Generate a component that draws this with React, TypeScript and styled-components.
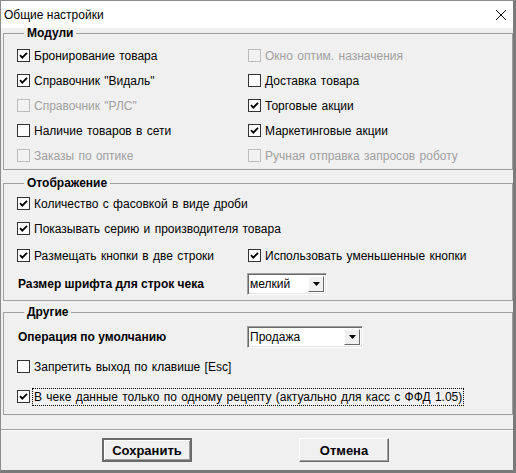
import React from "react";
import styled, { createGlobalStyle } from "styled-components";

const Global = createGlobalStyle`
  html, body { margin: 0; padding: 0; background: #f0f0f0; }
  body { font-family: "Liberation Sans", Arial, sans-serif; font-size: 12px; word-spacing: 1px; color: #000; }
  * { box-sizing: border-box; }
`;

const Window = styled.div`
  width: 516px;
  height: 473px;
  display: flex;
  flex-direction: column;
  background: #f0f0f0;
  border-left: 1px solid #8c8c8c;
  border-top: 1px solid #8c8c8c;
  border-right: 3px solid #7a7a7a;
  border-bottom: 3px solid #7a7a7a;
  overflow: hidden;
`;

const TitleBar = styled.div`
  height: 27px;
  flex: none;
  background: #fff;
  display: flex;
  align-items: center;
  justify-content: space-between;
  padding: 0 6px 0 3px;
`;

const Title = styled.span`
  font-family: "Liberation Sans", Arial, sans-serif;
  font-size: 12px;
  word-spacing: 0;
  color: #000;
`;

const Body = styled.div`
  display: flex;
  flex-direction: column;
  padding-left: 2px;
`;

const Group = styled.fieldset<{ $mt: number; $pt: number; $pb: number }>`
  margin: ${(p) => p.$mt}px 0 0 0;
  padding: ${(p) => p.$pt}px 0 ${(p) => p.$pb}px 13px;
  border: 1px solid #a0a0a0;
  min-width: 0;
`;

const Legend = styled.legend`
  font-weight: bold;
  font-size: 12px;
  word-spacing: 0;
  line-height: 10px;
  padding: 0 3px;
  margin-left: 7px;
`;

const Grid = styled.div`
  display: grid;
  grid-template-columns: 231px 1fr;
`;

const Row = styled.div<{ $mt?: number; $h?: number }>`
  display: flex;
  align-items: center;
  height: ${(p) => p.$h ?? 25}px;
  margin-top: ${(p) => p.$mt ?? 0}px;
`;

const CheckLabel = styled.label<{ $disabled?: boolean }>`
  display: flex;
  align-items: center;
  gap: 5px;
  color: ${(p) => (p.$disabled ? "#a0a0a0" : "#000")};
  white-space: nowrap;
`;

const Box = styled.span<{ $disabled?: boolean }>`
  width: 13px;
  height: 13px;
  flex: none;
  border: 1px solid ${(p) => (p.$disabled ? "#bdbdbd" : "#333")};
  background: ${(p) => (p.$disabled ? "#f2f2f2" : "#fff")};
  display: flex;
  align-items: center;
  justify-content: center;
`;

const Text = styled.span<{ $focus?: boolean }>`
  padding: 1px 1px;
  margin-left: -2px;
  outline: ${(p) => (p.$focus ? "1px dotted #000" : "none")};
  outline-offset: 0;
`;

const BoldLabel = styled.span`
  font-weight: bold;
  font-size: 12px;
  word-spacing: 0;
  padding-left: 1px;
`;

const SettingRow = styled.div<{ $mt: number; $h: number }>`
  display: grid;
  grid-template-columns: 230px auto;
  align-items: center;
  height: ${(p) => p.$h}px;
  margin-top: ${(p) => p.$mt}px;
`;

const Combo = styled.div<{ $w: number }>`
  width: ${(p) => p.$w}px;
  height: 22px;
  display: flex;
  background: #fff;
  border-top: 1px solid #a0a0a0;
  border-left: 1px solid #a0a0a0;
  border-right: 1px solid #fff;
  border-bottom: 1px solid #fff;
  box-shadow: inset 1px 1px 0 #696969, inset -1px -1px 0 #e3e3e3;
  padding: 2px;
`;

const ComboText = styled.span`
  flex: 1;
  display: flex;
  align-items: center;
  color: #000;
`;

const DropBtn = styled.span`
  width: 16px;
  flex: none;
  background: #f0f0f0;
  border-top: 1px solid #fff;
  border-left: 1px solid #fff;
  border-right: 1px solid #696969;
  border-bottom: 1px solid #696969;
  display: flex;
  align-items: center;
  justify-content: center;
`;

const ButtonBar = styled.div`
  flex: 1;
  margin-top: 14px;
  border-top: 1px solid #a0a0a0;
  box-shadow: inset 0 1px 0 #fff;
  display: flex;
  align-items: flex-start;
  padding: 8px 0 0 101px;
  gap: 107px;
`;

const Button = styled.button<{ $default?: boolean }>`
  width: 90px;
  height: 24px;
  font-family: "Liberation Sans", Arial, sans-serif;
  font-size: 13px;
  font-weight: bold;
  color: #000;
  background: #f0f0f0;
  padding: 0;
  border: ${(p) => (p.$default ? "2px solid #6a6a6a" : "1px solid")};
  border-color: ${(p) => (p.$default ? "#6a6a6a" : "#fff #696969 #696969 #fff")};
  box-shadow: ${(p) =>
    p.$default ? "inset 1px 1px 0 #fff, inset -1px -1px 0 #a0a0a0" : "inset -1px -1px 0 #a0a0a0"};
`;

const Check = () => (
  <svg width="9" height="9" viewBox="0 0 9 9">
    <polyline points="1,4.2 3.3,6.6 8,1.8" fill="none" stroke="#000" strokeWidth="1.8" />
  </svg>
);

const CheckBox = ({
  label,
  checked,
  disabled,
  focus,
}: {
  label: string;
  checked?: boolean;
  disabled?: boolean;
  focus?: boolean;
}) => (
  <CheckLabel $disabled={disabled}>
    <Box $disabled={disabled}>{checked && <Check />}</Box>
    <Text $focus={focus}>{label}</Text>
  </CheckLabel>
);

const Arrow = () => (
  <svg width="7" height="4" viewBox="0 0 7 4">
    <polygon points="0,0 7,0 3.5,4" fill="#000" />
  </svg>
);

const ComboBox = ({ value, width }: { value: string; width: number }) => (
  <Combo $w={width}>
    <ComboText>{value}</ComboText>
    <DropBtn>
      <Arrow />
    </DropBtn>
  </Combo>
);

const CloseIcon = () => (
  <svg width="12" height="12" viewBox="0 0 12 12">
    <path d="M1 1 L11 11 M11 1 L1 11" stroke="#000" strokeWidth="1" fill="none" />
  </svg>
);

export default function App() {
  return (
    <>
      <Global />
      <Window>
        <TitleBar>
          <Title>Общие настройки</Title>
          <CloseIcon />
        </TitleBar>
        <Body>
          <Group $mt={0} $pt={5} $pb={1}>
            <Legend>Модули</Legend>
            <Grid>
              <Row><CheckBox label="Бронирование товара" checked /></Row>
              <Row><CheckBox label="Окно оптим. назначения" disabled /></Row>
              <Row><CheckBox label='Справочник "Видаль"' checked /></Row>
              <Row><CheckBox label="Доставка товара" /></Row>
              <Row><CheckBox label='Справочник "РЛС"' disabled /></Row>
              <Row><CheckBox label="Торговые акции" checked /></Row>
              <Row><CheckBox label="Наличие товаров в сети" /></Row>
              <Row><CheckBox label="Маркетинговые акции" checked /></Row>
              <Row><CheckBox label="Заказы по оптике" disabled /></Row>
              <Row><CheckBox label="Ручная отправка запросов роботу" disabled /></Row>
            </Grid>
          </Group>
          <Group $mt={8} $pt={3} $pb={5}>
            <Legend>Отображение</Legend>
            <Row><CheckBox label="Количество с фасовкой в виде дроби" checked /></Row>
            <Row><CheckBox label="Показывать серию и производителя товара" checked /></Row>
            <Grid>
              <Row $mt={2}><CheckBox label="Размещать кнопки в две строки" checked /></Row>
              <Row $mt={2}><CheckBox label="Использовать уменьшенные кнопки" checked /></Row>
            </Grid>
            <SettingRow $mt={5} $h={22}>
              <BoldLabel>Размер шрифта для строк чека</BoldLabel>
              <ComboBox value="мелкий" width={80} />
            </SettingRow>
          </Group>
          <Group $mt={6} $pt={0} $pb={5}>
            <Legend>Другие</Legend>
            <SettingRow $mt={9} $h={22}>
              <BoldLabel>Операция по умолчанию</BoldLabel>
              <ComboBox value="Продажа" width={116} />
            </SettingRow>
            <Row $mt={6}><CheckBox label="Запретить выход по клавише [Esc]" /></Row>
            <Row $mt={5}>
              <CheckBox label="В чеке данные только по одному рецепту (актуально для касс с ФФД 1.05)" checked focus />
            </Row>
          </Group>
        </Body>
        <ButtonBar>
          <Button $default>Сохранить</Button>
          <Button>Отмена</Button>
        </ButtonBar>
      </Window>
    </>
  );
}
